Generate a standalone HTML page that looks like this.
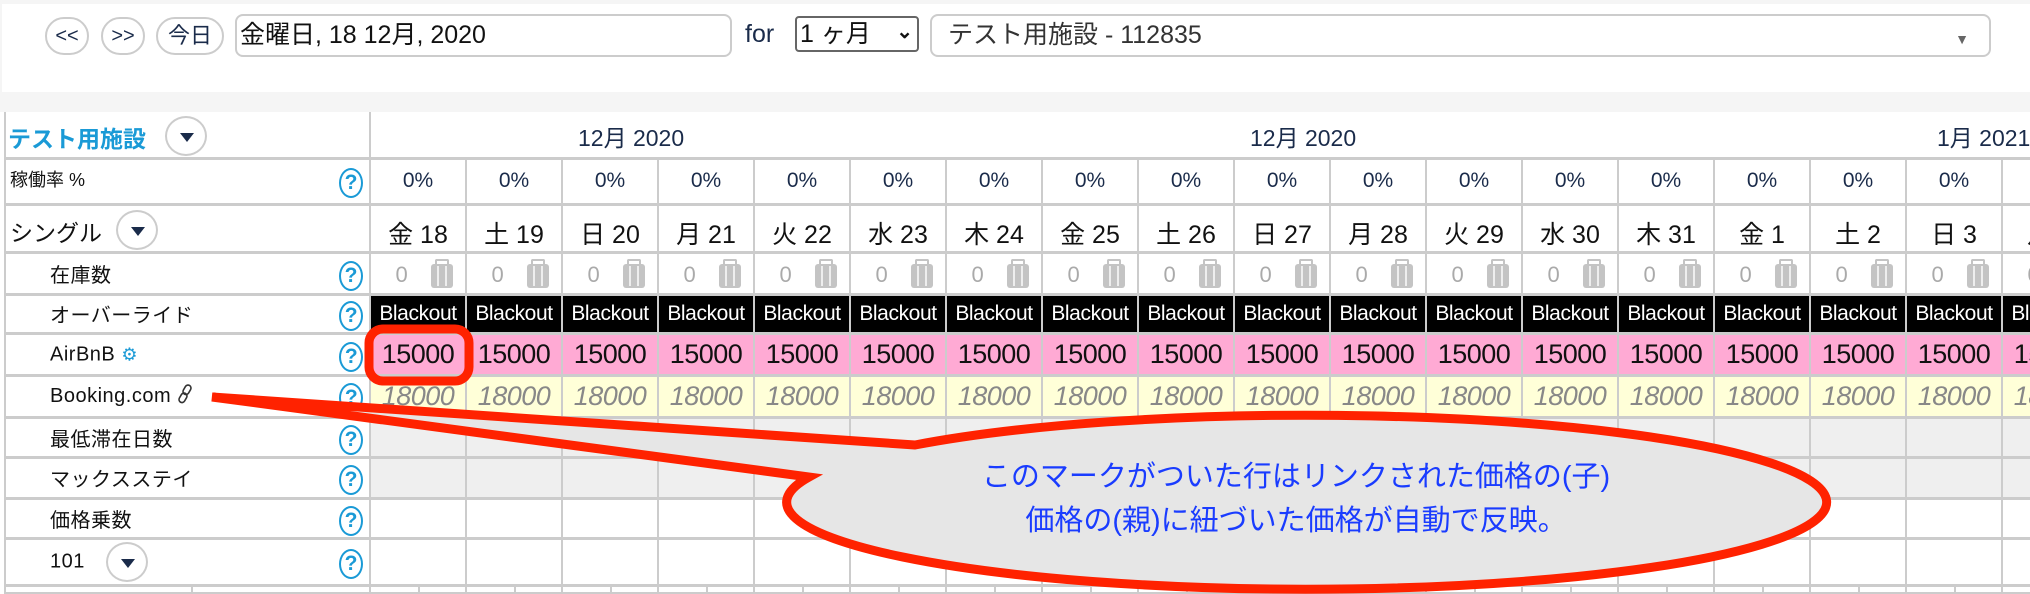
<!DOCTYPE html>
<html><head><meta charset="utf-8"><style>
*{margin:0;padding:0;box-sizing:border-box}
body{width:2030px;height:594px;overflow:hidden;background:#f5f5f5;font-family:"Liberation Sans","Noto Sans CJK JP",sans-serif;position:relative;color:#111}
.top{position:absolute;left:2px;top:4px;width:2028px;height:88px;background:#fff}
.btn{position:absolute;top:17px;height:38px;border:2px solid #ccc;border-radius:19px;background:#fff;font-size:20px;text-align:center;line-height:34px;color:#1a2b4a}
.inp{position:absolute;top:14px;height:43px;border:2px solid #ccc;border-radius:8px;background:#fff;font-size:25px;line-height:39px;padding-left:3px}
.tbl{position:absolute;left:0;top:112px;width:2030px;height:482px;background:#fff;overflow:hidden}
.r{position:absolute;left:4px;width:2100px;display:flex;border-top:3px solid #ccc}
.r>div{width:96px;flex:none;border-left:2px solid #ccc;position:relative;text-align:center;white-space:nowrap;overflow:hidden}
.r>div:first-child{width:365px;text-align:left;background:#fff!important;color:#111!important;font-style:normal!important;padding:0!important}
.q{position:absolute;right:6px;top:50%;margin-top:-14px;width:24px;height:30px;border:2px solid #1a9ad6;border-radius:50%;color:#1a9ad6;font-size:21px;line-height:26px;text-align:center;font-weight:bold}
.lb{position:absolute;left:44px;font-size:20px;top:50%;transform:translateY(-55%);color:#111;font-style:normal;letter-spacing:0.5px}
.dd{position:absolute;width:42px;height:40px;border:2px solid #ccc;border-radius:50%;background:#fff}
.dd:after{content:"";position:absolute;left:13px;top:15px;border-left:7px solid transparent;border-right:7px solid transparent;border-top:9px solid #1a2b4a}
.occ>div{font-size:21px;color:#1a2b4a;padding-top:9px}
.day>div{font-size:25px;padding-top:9px}
.inv>div{color:#aaa;font-size:22px;padding-top:8px;text-align:left}
.bk>div{background:#000;color:#fff;font-size:21px;padding-top:6px;letter-spacing:-0.4px}
.ab>div{background:#ffaad4;font-size:27px;padding-top:4px;letter-spacing:-0.5px}
.bo>div{background:#ffffd8;font-size:27px;color:#888;font-style:italic;padding-top:4px;letter-spacing:-0.5px}
.gr>div{background:#efefef}
.su{position:absolute;left:60px;top:10px;width:22px;height:24px;background:#c4c4c4;border-radius:3px}
.su:before{content:"";position:absolute;left:4px;top:-5px;width:10px;height:6px;border:2px solid #c4c4c4;border-bottom:0;border-radius:2px 2px 0 0}
.su:after{content:"";position:absolute;left:6px;top:2px;width:2px;height:20px;background:#eee;box-shadow:8px 0 0 #eee}
.mh{position:absolute;top:7px;font-size:23px;color:#1a2b4a;white-space:nowrap}
</style></head><body>
<div class="top"></div>
<div class="btn" style="left:45px;width:44px">&lt;&lt;</div>
<div class="btn" style="left:101px;width:44px">&gt;&gt;</div>
<div class="btn" style="left:156px;width:68px;font-size:22px">今日</div>
<div class="inp" style="left:235px;width:497px">金曜日, 18 12月, 2020</div>
<div style="position:absolute;left:745px;top:20px;font-size:25px;color:#1a2b4a">for</div>
<div class="inp" style="left:795px;width:124px;border:2px solid #666;border-radius:4px;top:16px;height:36px;line-height:32px;font-size:25px">1 ヶ月<span style="position:absolute;right:4px;top:-2px;font-size:20px;font-weight:bold">⌄</span></div>
<div class="inp" style="left:930px;width:1061px;color:#333;font-size:25px;padding-left:16px">テスト用施設 - 112835<span style="position:absolute;right:20px;top:4px;font-size:14px;color:#666">▼</span></div>

<div class="tbl">
<div style="position:absolute;left:4px;top:0;width:367px;height:46px;border-left:2px solid #ccc;border-right:2px solid #ccc"></div>
<div style="position:absolute;left:8px;top:8px;font-size:23px;font-weight:bold;color:#1a9ad6">テスト用施設</div>
<div class="dd" style="left:165px;top:4px"></div>
<div class="mh" style="left:578px">12月 2020</div>
<div class="mh" style="left:1250px">12月 2020</div>
<div class="mh" style="left:1937px">1月 2021</div>

<div class="r occ" style="top:45px;height:47px"><div><span style="position:absolute;left:4px;top:6px;font-size:18px">稼働率 %</span><span class="q">?</span></div><div>0%</div><div>0%</div><div>0%</div><div>0%</div><div>0%</div><div>0%</div><div>0%</div><div>0%</div><div>0%</div><div>0%</div><div>0%</div><div>0%</div><div>0%</div><div>0%</div><div>0%</div><div>0%</div><div>0%</div><div>0%</div></div>

<div class="r day" style="top:91px;height:49px"><div><span style="position:absolute;left:4px;top:8px;font-size:23px">シングル</span><span class="dd" style="left:110px;top:4px"></span></div><div>金 18</div><div>土 19</div><div>日 20</div><div>月 21</div><div>火 22</div><div>水 23</div><div>木 24</div><div>金 25</div><div>土 26</div><div>日 27</div><div>月 28</div><div>火 29</div><div>水 30</div><div>木 31</div><div>金 1</div><div>土 2</div><div>日 3</div><div>月 4</div></div>

<div class="r inv" style="top:139px;height:44px"><div><span class="lb">在庫数</span><span class="q">?</span></div>
<div>&nbsp;&nbsp;&nbsp;&nbsp;0<i class="su"></i></div><div>&nbsp;&nbsp;&nbsp;&nbsp;0<i class="su"></i></div><div>&nbsp;&nbsp;&nbsp;&nbsp;0<i class="su"></i></div><div>&nbsp;&nbsp;&nbsp;&nbsp;0<i class="su"></i></div><div>&nbsp;&nbsp;&nbsp;&nbsp;0<i class="su"></i></div><div>&nbsp;&nbsp;&nbsp;&nbsp;0<i class="su"></i></div><div>&nbsp;&nbsp;&nbsp;&nbsp;0<i class="su"></i></div><div>&nbsp;&nbsp;&nbsp;&nbsp;0<i class="su"></i></div><div>&nbsp;&nbsp;&nbsp;&nbsp;0<i class="su"></i></div><div>&nbsp;&nbsp;&nbsp;&nbsp;0<i class="su"></i></div><div>&nbsp;&nbsp;&nbsp;&nbsp;0<i class="su"></i></div><div>&nbsp;&nbsp;&nbsp;&nbsp;0<i class="su"></i></div><div>&nbsp;&nbsp;&nbsp;&nbsp;0<i class="su"></i></div><div>&nbsp;&nbsp;&nbsp;&nbsp;0<i class="su"></i></div><div>&nbsp;&nbsp;&nbsp;&nbsp;0<i class="su"></i></div><div>&nbsp;&nbsp;&nbsp;&nbsp;0<i class="su"></i></div><div>&nbsp;&nbsp;&nbsp;&nbsp;0<i class="su"></i></div><div>&nbsp;&nbsp;&nbsp;&nbsp;0<i class="su"></i></div></div>

<div class="r bk" style="top:181px;height:41px"><div><span class="lb">オーバーライド</span><span class="q">?</span></div><div>Blackout</div><div>Blackout</div><div>Blackout</div><div>Blackout</div><div>Blackout</div><div>Blackout</div><div>Blackout</div><div>Blackout</div><div>Blackout</div><div>Blackout</div><div>Blackout</div><div>Blackout</div><div>Blackout</div><div>Blackout</div><div>Blackout</div><div>Blackout</div><div>Blackout</div><div>Blackout</div></div>

<div class="r ab" style="top:220px;height:44px"><div><span class="lb">AirBnB <span style="color:#1a9ad6;font-size:18px">⚙</span></span><span class="q">?</span></div><div>15000</div><div>15000</div><div>15000</div><div>15000</div><div>15000</div><div>15000</div><div>15000</div><div>15000</div><div>15000</div><div>15000</div><div>15000</div><div>15000</div><div>15000</div><div>15000</div><div>15000</div><div>15000</div><div>15000</div><div>15000</div></div>

<div class="r bo" style="top:262px;height:43px"><div><span class="lb">Booking.com <svg width="16" height="20" viewBox="0 0 16 20" style="vertical-align:-2px"><g fill="none" stroke="#333" stroke-width="1.6"><rect x="7" y="1" width="6" height="10" rx="3" transform="rotate(30 10 6)"/><rect x="3" y="9" width="6" height="10" rx="3" transform="rotate(30 6 14)"/></g></svg></span><span class="q">?</span></div><div>18000</div><div>18000</div><div>18000</div><div>18000</div><div>18000</div><div>18000</div><div>18000</div><div>18000</div><div>18000</div><div>18000</div><div>18000</div><div>18000</div><div>18000</div><div>18000</div><div>18000</div><div>18000</div><div>18000</div><div>18000</div></div>

<div class="r gr" style="top:304px;height:42px"><div><span class="lb">最低滞在日数</span><span class="q">?</span></div><div></div><div></div><div></div><div></div><div></div><div></div><div></div><div></div><div></div><div></div><div></div><div></div><div></div><div></div><div></div><div></div><div></div><div></div></div>
<div class="r gr" style="top:344px;height:42px"><div><span class="lb">マックスステイ</span><span class="q">?</span></div><div></div><div></div><div></div><div></div><div></div><div></div><div></div><div></div><div></div><div></div><div></div><div></div><div></div><div></div><div></div><div></div><div></div><div></div></div>
<div class="r" style="top:385px;height:42px"><div><span class="lb">価格乗数</span><span class="q">?</span></div><div></div><div></div><div></div><div></div><div></div><div></div><div></div><div></div><div></div><div></div><div></div><div></div><div></div><div></div><div></div><div></div><div></div><div></div></div>
<div class="r" style="top:425px;height:49px"><div><span class="lb">101</span><span class="dd" style="left:100px;top:2px"></span><span class="q">?</span></div><div></div><div></div><div></div><div></div><div></div><div></div><div></div><div></div><div></div><div></div><div></div><div></div><div></div><div></div><div></div><div></div><div></div><div></div></div>
<div class="r" style="top:472px;height:10px;border-bottom:2px solid #ccc"><div style="background:linear-gradient(90deg,transparent 185px,#ccc 185px 187px,transparent 187px)!important"></div><div style="background:linear-gradient(90deg,transparent 47px,#ccc 47px 49px,transparent 49px)"></div><div style="background:linear-gradient(90deg,transparent 47px,#ccc 47px 49px,transparent 49px)"></div><div style="background:linear-gradient(90deg,transparent 47px,#ccc 47px 49px,transparent 49px)"></div><div style="background:linear-gradient(90deg,transparent 47px,#ccc 47px 49px,transparent 49px)"></div><div style="background:linear-gradient(90deg,transparent 47px,#ccc 47px 49px,transparent 49px)"></div><div style="background:linear-gradient(90deg,transparent 47px,#ccc 47px 49px,transparent 49px)"></div><div style="background:linear-gradient(90deg,transparent 47px,#ccc 47px 49px,transparent 49px)"></div><div style="background:linear-gradient(90deg,transparent 47px,#ccc 47px 49px,transparent 49px)"></div><div style="background:linear-gradient(90deg,transparent 47px,#ccc 47px 49px,transparent 49px)"></div><div style="background:linear-gradient(90deg,transparent 47px,#ccc 47px 49px,transparent 49px)"></div><div style="background:linear-gradient(90deg,transparent 47px,#ccc 47px 49px,transparent 49px)"></div><div style="background:linear-gradient(90deg,transparent 47px,#ccc 47px 49px,transparent 49px)"></div><div style="background:linear-gradient(90deg,transparent 47px,#ccc 47px 49px,transparent 49px)"></div><div style="background:linear-gradient(90deg,transparent 47px,#ccc 47px 49px,transparent 49px)"></div><div style="background:linear-gradient(90deg,transparent 47px,#ccc 47px 49px,transparent 49px)"></div><div style="background:linear-gradient(90deg,transparent 47px,#ccc 47px 49px,transparent 49px)"></div><div style="background:linear-gradient(90deg,transparent 47px,#ccc 47px 49px,transparent 49px)"></div><div style="background:linear-gradient(90deg,transparent 47px,#ccc 47px 49px,transparent 49px)"></div></div>
</div>

<svg width="2030" height="594" style="position:absolute;left:0;top:0">
<rect x="369" y="329" width="100" height="52" rx="14" fill="none" stroke="#ff2200" stroke-width="9"/>
<path d="M915 445 L212 397 L809 477 A520 87 0 1 0 915 445 Z" fill="#e6e6e6" stroke="#ff2200" stroke-width="9" stroke-linejoin="miter"/>
<text x="1296" y="486" text-anchor="middle" font-size="29" fill="#1a3cff" font-family="Liberation Sans,Noto Sans CJK JP,sans-serif">このマークがついた行はリンクされた価格の(子)</text>
<text x="1296" y="530" text-anchor="middle" font-size="29" fill="#1a3cff" font-family="Liberation Sans,Noto Sans CJK JP,sans-serif">価格の(親)に紐づいた価格が自動で反映。</text>
</svg>
</body></html>
